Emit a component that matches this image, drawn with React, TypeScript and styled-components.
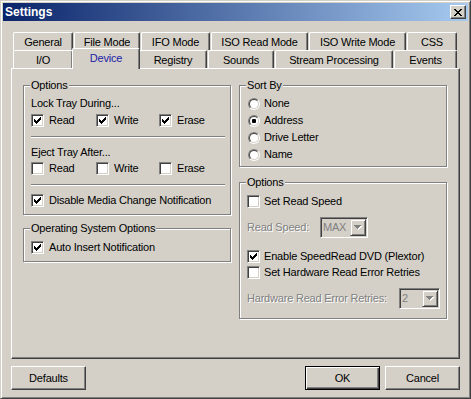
import React from "react";
import styled, { createGlobalStyle } from "styled-components";

const FACE = "#d4d0c8";
const SHADOW = "#808080";
const DARK = "#404040";

const Global = createGlobalStyle`
  html, body { margin: 0; padding: 0; background: ${FACE}; }
  body { font-family: "Liberation Sans", Arial, sans-serif; font-size: 11px; letter-spacing: -0.2px; color: #000; }
  * { box-sizing: border-box; }
`;

const Window = styled.div`
  width: 471px;
  height: 399px;
  background: ${FACE};
  border: 1px solid;
  border-color: ${FACE} ${DARK} ${DARK} ${FACE};
  box-shadow: inset 1px 1px 0 #fff, inset -1px -1px 0 ${SHADOW};
  padding: 2px;
  display: flex;
  flex-direction: column;
`;

const TitleBar = styled.div`
  height: 18px;
  flex: none;
  display: flex;
  align-items: center;
  padding: 0 2px;
  background: linear-gradient(to right, #0a246a, #a6caf0);
`;

const Title = styled.span`
  color: #fff;
  font-weight: bold;
  font-size: 12px;
  line-height: 14px;
  letter-spacing: 0;
`;

const CloseButton = styled.div`
  margin-left: auto;
  width: 16px;
  height: 14px;
  background: ${FACE};
  border: 1px solid;
  border-color: #fff ${DARK} ${DARK} #fff;
  box-shadow: inset -1px -1px 0 ${SHADOW};
  display: flex;
  align-items: center;
  justify-content: center;
  padding-right: 1px;
`;

const Body = styled.div`
  flex: 1;
  display: flex;
  flex-direction: column;
  padding: 11px 8px 0 8px;
`;

const TabRow = styled.div`
  display: flex;
  height: 18px;
  flex: none;
  padding-left: 2px;
  gap: 1px;
`;

const Tab = styled.div<{ $w: number; $active?: boolean }>`
  flex: none;
  width: ${(p) => (p.$active ? p.$w + 4 : p.$w)}px;
  height: ${(p) => (p.$active ? 21 : 18)}px;
  margin: ${(p) => (p.$active ? "-2px -2px 0 -2px" : "0")};
  position: ${(p) => (p.$active ? "relative" : "static")};
  z-index: ${(p) => (p.$active ? 2 : "auto")};
  background: ${FACE};
  border-top: 1px solid #fff;
  border-left: 1px solid #fff;
  border-right: 1px solid ${DARK};
  box-shadow: inset -1px 0 0 ${SHADOW};
  border-radius: 2px 2px 0 0;
  text-align: center;
  line-height: 13px;
  padding-top: 3px;
  color: ${(p) => (p.$active ? "#1c1ca6" : "#000")};
  white-space: nowrap;
`;

const Panel = styled.div`
  width: 449px;
  height: 291px;
  flex: none;
  border: 1px solid;
  border-color: #fff ${DARK} ${DARK} #fff;
  box-shadow: inset -1px -1px 0 ${SHADOW};
  padding: 16px 0 0 11px;
  display: grid;
  grid-template-columns: 208px 208px;
  column-gap: 8px;
  align-items: start;
`;

const Column = styled.div`
  display: flex;
  flex-direction: column;
`;

const Group = styled.div<{ $pad: string; $mt?: number }>`
  position: relative;
  border: 1px solid ${SHADOW};
  box-shadow: inset 1px 1px 0 #fff, 1px 1px 0 #fff;
  padding: ${(p) => p.$pad};
  margin-top: ${(p) => p.$mt ?? 0}px;
  display: flex;
  flex-direction: column;
`;

const Legend = styled.span`
  position: absolute;
  top: -7px;
  left: 6px;
  padding: 0 1px;
  background: ${FACE};
  line-height: 13px;
  white-space: nowrap;
`;

const TextLine = styled.div<{ $mt?: number }>`
  height: 13px;
  line-height: 13px;
  margin-top: ${(p) => p.$mt ?? 0}px;
  white-space: nowrap;
`;

const Row = styled.div<{ $mt?: number }>`
  display: flex;
  align-items: center;
  margin-top: ${(p) => p.$mt ?? 0}px;
`;

const CheckItem = styled.label<{ $w?: number; $gap?: number; $mt?: number }>`
  display: flex;
  align-items: center;
  height: 13px;
  line-height: 13px;
  width: ${(p) => (p.$w ? p.$w + "px" : "auto")};
  gap: ${(p) => p.$gap ?? 5}px;
  margin-top: ${(p) => p.$mt ?? 0}px;
  white-space: nowrap;
  flex: none;
`;

const Box = styled.span`
  flex: none;
  width: 13px;
  height: 13px;
  background: #fff;
  border: 1px solid;
  border-color: ${SHADOW} #fff #fff ${SHADOW};
  box-shadow: inset 1px 1px 0 ${DARK}, inset -1px -1px 0 ${FACE};
  display: flex;
  align-items: center;
  justify-content: center;
`;

const RadioOuter = styled.span`
  flex: none;
  width: 12px;
  height: 12px;
  margin-left: 1px;
  border-radius: 50%;
  border: 1px solid;
  border-color: ${SHADOW} #fff #fff ${SHADOW};
  display: flex;
  align-items: center;
  justify-content: center;
`;

const RadioInner = styled.span<{ $on: boolean }>`
  width: 10px;
  height: 10px;
  border-radius: 50%;
  border: 1px solid;
  border-color: ${DARK} ${FACE} ${FACE} ${DARK};
  background: #fff;
  display: flex;
  align-items: center;
  justify-content: center;
  &::after {
    content: "";
    width: 4px;
    height: 4px;
    border-radius: 1px;
    background: ${(p) => (p.$on ? "#000" : "transparent")};
  }
`;

const RadioItem = styled.label<{ $mt?: number }>`
  display: flex;
  align-items: center;
  height: 13px;
  line-height: 13px;
  gap: 4px;
  margin-top: ${(p) => p.$mt ?? 0}px;
`;

const Separator = styled.div<{ $mt: number }>`
  height: 2px;
  margin-top: ${(p) => p.$mt}px;
  border-top: 1px solid ${SHADOW};
  border-bottom: 1px solid #fff;
`;

const DisabledLabel = styled.span<{ $w: number }>`
  width: ${(p) => p.$w}px;
  flex: none;
  color: ${SHADOW};
  text-shadow: 1px 1px 0 #fff;
  line-height: 13px;
  white-space: nowrap;
`;

const Combo = styled.div<{ $w: number }>`
  width: ${(p) => p.$w}px;
  height: 21px;
  flex: none;
  display: flex;
  border: 1px solid;
  border-color: ${SHADOW} #fff #fff ${SHADOW};
  box-shadow: inset 1px 1px 0 ${DARK}, inset -1px -1px 0 ${FACE};
  padding: 1px;
  background: ${FACE};
`;

const ComboText = styled.span`
  flex: 1;
  color: ${SHADOW};
  line-height: 17px;
  padding-left: 1px;
`;

const ComboButton = styled.span`
  width: 16px;
  height: 17px;
  flex: none;
  background: ${FACE};
  border: 1px solid;
  border-color: ${FACE} ${DARK} ${DARK} ${FACE};
  box-shadow: inset 1px 1px 0 #fff, inset -1px -1px 0 ${SHADOW};
  display: flex;
  align-items: center;
  justify-content: center;
`;

const ButtonRow = styled.div`
  display: flex;
  gap: 5px;
  margin-top: 7px;
`;

const Button = styled.div<{ $default?: boolean; $push?: boolean }>`
  width: 75px;
  height: 24px;
  background: ${FACE};
  border: 1px solid;
  border-color: ${(p) => (p.$default ? "#000" : `#fff ${DARK} ${DARK} #fff`)};
  box-shadow: ${(p) =>
    p.$default
      ? `inset 1px 1px 0 #fff, inset -1px -1px 0 ${DARK}, inset -2px -2px 0 ${SHADOW}`
      : `inset -1px -1px 0 ${SHADOW}`};
  display: flex;
  align-items: center;
  justify-content: center;
  margin-left: ${(p) => (p.$push ? "auto" : "0")};
`;

const CheckMark = () => (
  <svg width="7" height="7" viewBox="0 0 7 7" shapeRendering="crispEdges">
    {[2, 3, 4, 3, 2, 1, 0].map((top, i) => (
      <rect key={i} x={i} y={top} width="1" height="3" fill="#000" />
    ))}
  </svg>
);

const CloseGlyph = () => {
  const rows: [number, number][][] = [
    [[0, 2], [6, 2]],
    [[1, 2], [5, 2]],
    [[2, 4]],
    [[3, 2]],
    [[2, 4]],
    [[1, 2], [5, 2]],
    [[0, 2], [6, 2]],
  ];
  return (
    <svg width="8" height="7" viewBox="0 0 8 7" shapeRendering="crispEdges">
      {rows.map((segs, y) =>
        segs.map(([x, w], k) => <rect key={`${y}-${k}`} x={x} y={y} width={w} height="1" fill="#000" />)
      )}
    </svg>
  );
};

const Arrow = () => (
  <svg width="8" height="5" viewBox="0 0 8 5" shapeRendering="crispEdges">
    {[7, 5, 3, 1].map((w, i) => (
      <rect key={`w${i}`} x={(7 - w) / 2 + 1} y={i + 1} width={w} height="1" fill="#fff" />
    ))}
    {[7, 5, 3, 1].map((w, i) => (
      <rect key={`g${i}`} x={(7 - w) / 2} y={i} width={w} height="1" fill={SHADOW} />
    ))}
  </svg>
);

const Check = ({ label, checked, w, gap, mt }: { label: string; checked?: boolean; w?: number; gap?: number; mt?: number }) => (
  <CheckItem $w={w} $gap={gap} $mt={mt}>
    <Box>{checked && <CheckMark />}</Box>
    <span>{label}</span>
  </CheckItem>
);

const Radio = ({ label, on, mt }: { label: string; on?: boolean; mt?: number }) => (
  <RadioItem $mt={mt}>
    <RadioOuter>
      <RadioInner $on={!!on} />
    </RadioOuter>
    <span>{label}</span>
  </RadioItem>
);

const DropDown = ({ w, value }: { w: number; value: string }) => (
  <Combo $w={w}>
    <ComboText>{value}</ComboText>
    <ComboButton>
      <Arrow />
    </ComboButton>
  </Combo>
);

const row1 = [
  ["General", 60],
  ["File Mode", 66],
  ["IFO Mode", 69],
  ["ISO Read Mode", 97],
  ["ISO Write Mode", 97],
  ["CSS", 50],
] as const;

const row2 = [
  ["I/O", 60],
  ["Device", 64],
  ["Registry", 68],
  ["Sounds", 66],
  ["Stream Processing", 118],
  ["Events", 63],
] as const;

export default function App() {
  return (
    <>
      <Global />
      <Window>
        <TitleBar>
          <Title>Settings</Title>
          <CloseButton>
            <CloseGlyph />
          </CloseButton>
        </TitleBar>
        <Body>
          <TabRow>
            {row1.map(([t, w]) => (
              <Tab key={t} $w={w}>
                {t}
              </Tab>
            ))}
          </TabRow>
          <TabRow>
            {row2.map(([t, w]) => (
              <Tab key={t} $w={w} $active={t === "Device"}>
                {t}
              </Tab>
            ))}
          </TabRow>
          <Panel>
            <Column>
              <Group $pad="11px 5px 7px 7px">
                <Legend>Options</Legend>
                <TextLine>Lock Tray During...</TextLine>
                <Row $mt={4}>
                  <Check label="Read" checked w={65} />
                  <Check label="Write" checked w={63} />
                  <Check label="Erase" checked />
                </Row>
                <Separator $mt={9} />
                <TextLine $mt={8}>Eject Tray After...</TextLine>
                <Row $mt={3}>
                  <Check label="Read" w={65} />
                  <Check label="Write" w={63} />
                  <Check label="Erase" />
                </Row>
                <Separator $mt={9} />
                <Check label="Disable Media Change Notification" checked mt={8} />
              </Group>
              <Group $pad="12px 5px 7px 7px" $mt={13}>
                <Legend>Operating System Options</Legend>
                <Check label="Auto Insert Notification" checked />
              </Group>
            </Column>
            <Column>
              <Group $pad="11px 5px 5px 7px">
                <Legend>Sort By</Legend>
                <Radio label="None" />
                <Radio label="Address" on mt={4} />
                <Radio label="Drive Letter" mt={4} />
                <Radio label="Name" mt={4} />
              </Group>
              <Group $pad="12px 5px 9px 7px" $mt={15}>
                <Legend>Options</Legend>
                <Check label="Set Read Speed" gap={4} />
                <Row $mt={9}>
                  <DisabledLabel $w={73}>Read Speed:</DisabledLabel>
                  <DropDown w={48} value="MAX" />
                </Row>
                <Check label="Enable SpeedRead DVD (Plextor)" checked gap={4} mt={12} />
                <Check label="Set Hardware Read Error Retries" gap={4} mt={3} />
                <Row $mt={9}>
                  <DisabledLabel $w={152}>Hardware Read Error Retries:</DisabledLabel>
                  <DropDown w={41} value="2" />
                </Row>
              </Group>
            </Column>
          </Panel>
          <ButtonRow>
            <Button>Defaults</Button>
            <Button $default $push>
              OK
            </Button>
            <Button>Cancel</Button>
          </ButtonRow>
        </Body>
      </Window>
    </>
  );
}
